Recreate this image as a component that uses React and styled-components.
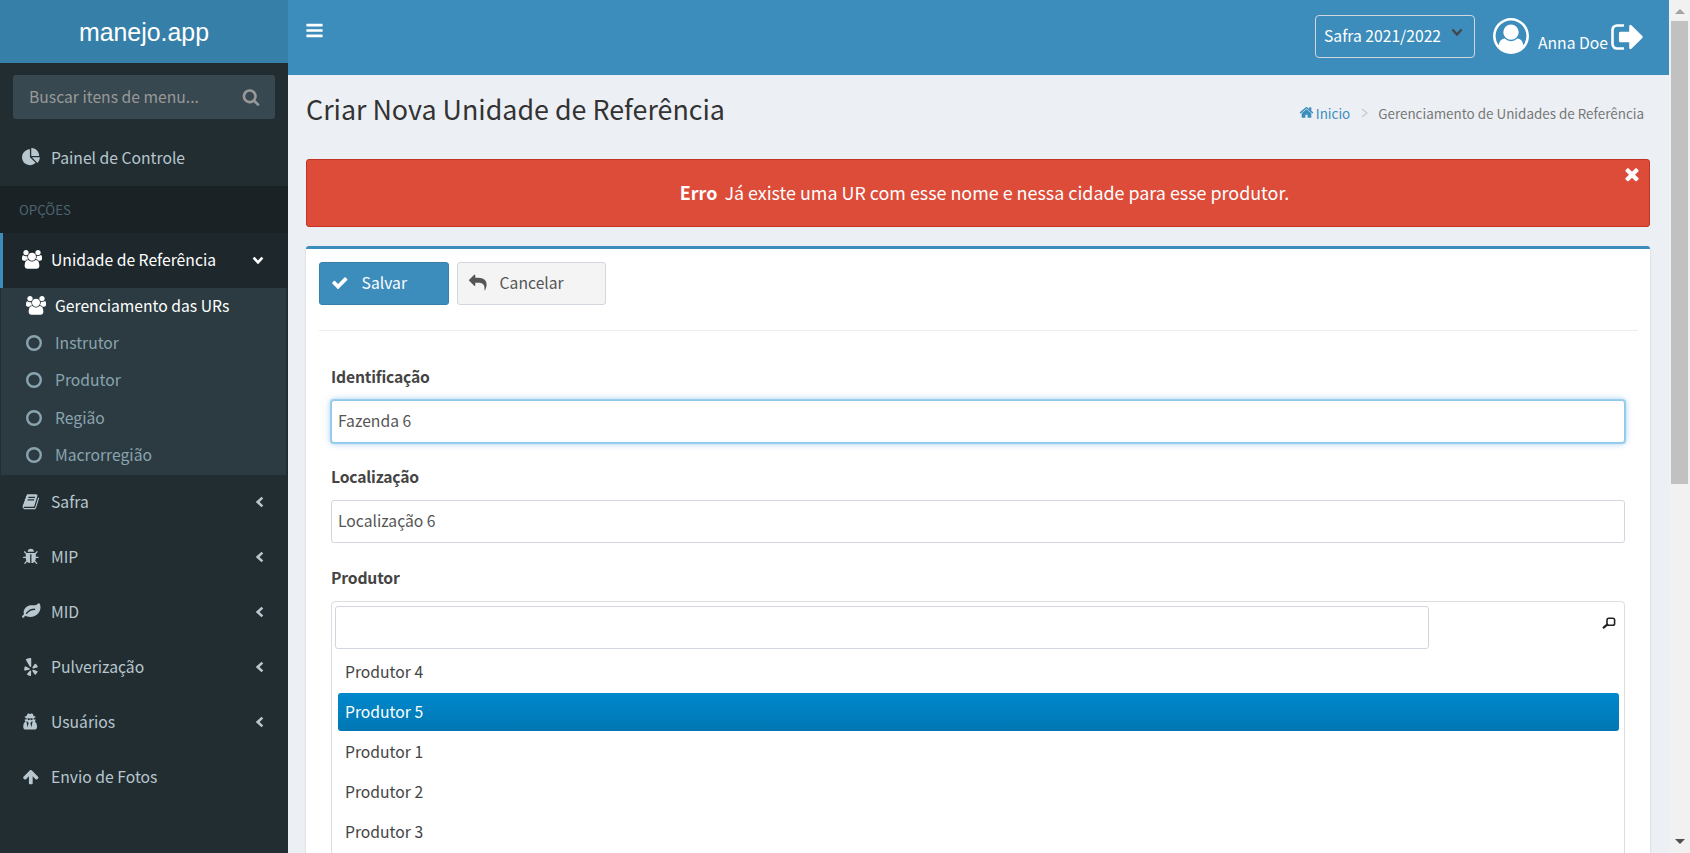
import React from 'react';
import styled, { createGlobalStyle, css } from 'styled-components';
import { FaYelp } from 'react-icons/fa';

const GlobalStyle = createGlobalStyle`
  *, *::before, *::after { box-sizing: border-box; }
  html, body { margin: 0; height: 100%; overflow: hidden; }
  body {
    font-family: 'Noto Sans CJK JP', 'Noto Sans CJK SC', 'Source Sans Pro', 'Open Sans', sans-serif;
    font-size: 15.7px;
    line-height: 24px;
    color: #444;
    background: #ecf0f5;
  }
  input, button { font: inherit; color: inherit; }
`;

/* ---------- icons (1792-unit grid) ---------- */

const PATHS = {
  bars: 'M1664 1344v128q0 26-19 45t-45 19h-1408q-26 0-45-19t-19-45v-128q0-26 19-45t45-19h1408q26 0 45 19t19 45zm0-512v128q0 26-19 45t-45 19h-1408q-26 0-45-19t-19-45v-128q0-26 19-45t45-19h1408q26 0 45 19t19 45zm0-512v128q0 26-19 45t-45 19h-1408q-26 0-45-19t-19-45v-128q0-26 19-45t45-19h1408q26 0 45 19t19 45z',
  search: 'M1216 832q0-185-131.5-316.5t-316.5-131.5-316.5 131.5-131.5 316.5 131.5 316.5 316.5 131.5 316.5-131.5 131.5-316.5zm512 832q0 52-38 90t-90 38q-54 0-90-38l-343-342q-179 124-399 124-143 0-273.5-55.5t-225-150-150-225-55.5-273.5 55.5-273.5 150-225 225-150 273.5-55.5 273.5 55.5 225 150 150 225 55.5 273.5q0 220-124 399l343 343q37 37 37 90z',
  pie: 'M768 890l546 546q-106 108-247.5 168t-298.5 60q-209 0-385.5-103t-279.5-279.5-103-385.5 103-385.5 279.5-279.5 385.5-103v762zm187 6h773q0 157-60 298.5t-168 247.5zm709-128h-768v-768q209 0 385.5 103t279.5 279.5 103 385.5z',
  users: 'M593 896q-162 5-265 128h-134q-82 0-138-40.5t-56-118.5q0-353 124-353 6 0 43.5 21t97.5 42.5 119 21.5q67 0 133-23-5 37-5 66 0 159 93 290zm1071 637q0 120-73 189.5t-194 69.5h-874q-121 0-194-69.5t-73-189.5q0-53 3.5-103.5t14-109 26.5-108.5 43-97.5 62-81 85.5-53.5 111.5-20q10 0 43 21.5t73 48 107 48 135 21.5 135-21.5 107-48 73-48 43-21.5q61 0 111.5 20t85.5 53.5 62 81 43 97.5 26.5 108.5 14 109 3.5 103.5zm-1024-1277q0 106-75 181t-181 75-181-75-75-181 75-181 181-75 181 75 75 181zm704 384q0 159-112.5 271.5t-271.5 112.5-271.5-112.5-112.5-271.5 112.5-271.5 271.5-112.5 271.5 112.5 112.5 271.5zm576 225q0 78-56 118.5t-138 40.5h-134q-103-123-265-128 93-131 93-290 0-29-5-66 66 23 133 23 59 0 119-21.5t97.5-42.5 43.5-21q124 0 124 353zm-128-609q0 106-75 181t-181 75-181-75-75-181 75-181 181-75 181 75 75 181z',
  book: 'M1703 478q40 57 18 129l-275 906q-19 64-76.5 107.5t-122.5 43.5h-923q-77 0-148.5-53.5t-99.5-131.5q-24-67-2-127 0-4 3-27t4-37q1-8-3-21.5t-3-19.5q2-11 8-21t16.5-23.5 16.5-23.5q23-38 45-91.5t30-91.5q3-10 .5-30t-.5-28q3-11 17-28t17-23q21-36 42-92t25-90q1-9-2.5-32t.5-28q4-13 22-30.5t22-22.5q19-26 42.5-84.5t27.5-96.5q1-8-3-25.5t-2-26.5q2-8 9-18t18-23 17-21q8-12 16.5-30.5t15-35 16-36 19.5-32 26.5-23.5 36-11.5 47.5 5.5l-1 3q38-9 51-9h761q74 0 114 56t18 130l-274 906q-36 119-71.5 153.5t-128.5 34.5h-869q-27 0-38 15-11 16-1 43 24 70 144 70h923q29 0 56-15.5t35-41.5l300-987q7-22 5-57 38 15 59 43zm-1064 2q-4 13 2 22.5t20 9.5h608q13 0 25.5-9.5t16.5-22.5l21-64q4-13-2-22.5t-20-9.5h-608q-13 0-25.5 9.5t-16.5 22.5zm-83 256q-4 13 2 22.5t20 9.5h608q13 0 25.5-9.5t16.5-22.5l21-64q4-13-2-22.5t-20-9.5h-608q-13 0-25.5 9.5t-16.5 22.5z',
  bug: 'M1696 960q0 26-19 45t-45 19h-224q0 171-67 290l208 209q19 19 19 45t-19 45q-18 19-45 19t-45-19l-198-197q-5 5-15 13t-42 28.5-65 36.5-82 29-97 13v-896h-128v896q-51 0-101.5-13.5t-87-33-66-39-43.5-32.5l-15-14-183 207q-20 21-48 21-24 0-43-16-19-18-20.5-44.5t15.5-46.5l202-227q-58-114-58-274h-224q-26 0-45-19t-19-45 19-45 45-19h224v-294l-173-173q-19-19-19-45t19-45 45-19 45 19l173 173h844l173-173q19-19 45-19t45 19 19 45-19 45l-173 173v294h224q26 0 45 19t19 45zm-480-576h-640q0-133 93.5-226.5t226.5-93.5 226.5 93.5 93.5 226.5z',
  leaf: 'M1280 704q0-26-19-45t-45-19q-172 0-318 49.5t-259.5 134-235.5 219.5q-19 21-19 45 0 26 19 45t45 19q24 0 45-19 27-24 74-71t67-66q137-124 268.5-176t313.5-52q26 0 45-19t19-45zm512-198q0 95-20 193-46 224-184.5 383t-357.5 268q-214 108-438 108-148 0-286-47-15-5-88-42t-96-37q-16 0-39.5 32t-45 70-52.5 70-60 32q-43 0-63.5-17.5t-45.5-59.5q-2-4-6-11t-5.5-10-3-9.5-1.5-13.5q0-35 31-73.5t68-65.5 68-56 31-48q0-4-14-38t-16-44q-9-51-9-104 0-115 43.5-220t119-184.5 170.5-139 204-95.5q55-18 145-25.5t179.5-9 178.5-6 163.5-24 113.5-56.5l29.5-29.5 29.5-28 27-20 36.5-16 43.5-4.5q39 0 70.5 46t47.5 112 24 124 8 96z',
  secret: 'M704 1472l96-448-96-128-128-64zm384 0l128-640-128 64-96 128zm160-917q-2-4-4-6-10-8-96-8-70 0-167 19-7 2-21 2t-21-2q-97-19-167-19-86 0-96 8-2 2-4 6 2 18 4 27 2 3 7.5 6.5t7.5 10.5q2 4 7.5 20.5t7 20.5 7.5 17 8.5 17 9 14 12 13.5 14 9.5 17.5 8 20.5 4 24.5 2q36 0 59-12.5t32.5-30 14.5-34.5 11.5-29.5 17.5-12.5h12q11 0 17.5 12.5t11.5 29.5 14.5 34.5 32.5 30 59 12.5q13 0 24.5-2t20.5-4 17.5-8 14-9.5 12-13.5 9-14 8.5-17 7.5-17 7-20.5 7.5-20.5q2-7 7.5-10.5t7.5-6.5q2-9 4-27zm416 879q0 121-73 190t-194 69h-874q-121 0-194-69t-73-190q0-61 4.5-118t19-125.5 37.5-123.5 63.5-103.5 93.5-74.5l-90-220h214q-22-64-22-128 0-12 2-32-194-40-194-96 0-57 210-99 17-62 51.5-134t70.5-114q32-37 76-37 30 0 84 31t84 31 84-31 84-31q44 0 76 37 36 42 70.5 114t51.5 134q210 42 210 99 0 56-194 96 7 81-20 160h214l-82 225q63 33 107.5 96.5t65.5 143.5 29 151.5 8 148.5z',
  up: 'M1675 971q0 51-37 90l-75 75q-38 38-91 38-54 0-90-38l-294-293v704q0 52-37.5 84.5t-90.5 32.5h-128q-53 0-90.5-32.5t-37.5-84.5v-704l-294 293q-36 38-90 38t-90-38l-75-75q-38-38-38-90 0-53 38-91l651-651q35-37 90-37 54 0 91 37l651 651q37 39 37 91z',
  user: 'M896 0q182 0 348 71t286 191 191 286 71 348q0 181-70.5 347t-190.5 286-286 191.5-349 71.5-349-71-285.5-191.5-190.5-286-71-347.5 71-348 191-286 286-191 348-71zm619 1351q149-205 149-455 0-156-61-298t-164-245-245-164-298-61-298 61-245 164-164 245-61 298q0 250 149 455 66-327 306-327 131 128 313 128t313-128q240 0 306 327zm-235-647q0-159-112.5-271.5t-271.5-112.5-271.5 112.5-112.5 271.5 112.5 271.5 271.5 112.5 271.5-112.5 112.5-271.5z',
  signout: 'M704 1440q0 4 1 20t.5 26.5-3 23.5-10 19.5-20.5 6.5h-320q-119 0-203.5-84.5t-84.5-203.5v-704q0-119 84.5-203.5t203.5-84.5h320q13 0 22.5 9.5t9.5 22.5q0 4 1 20t.5 26.5-3 23.5-10 19.5-20.5 6.5h-320q-66 0-113 47t-47 113v704q0 66 47 113t113 47h312l11.5 1 11.5 3 8 5.5 7 9 2 13.5zm928-544q0 26-19 45l-544 544q-19 19-45 19t-45-19-19-45v-288h-448q-26 0-45-19t-19-45v-384q0-26 19-45t45-19h448v-288q0-26 19-45t45-19 45 19l544 544q19 19 19 45z',
  home: 'M1472 992v480q0 26-19 45t-45 19h-384v-384h-256v384h-384q-26 0-45-19t-19-45v-480q0-1 .5-3t.5-3l575-474 575 474q1 2 1 6zm223-69l-62 74q-8 9-21 11h-3q-13 0-21-7l-692-577-692 577q-12 8-24 7-13-2-21-11l-62-74q-8-10-7-23.5t11-21.5l719-599q32-26 76-26t76 26l244 204v-195q0-14 9-23t23-9h192q14 0 23 9t9 23v408l219 182q10 8 11 21.5t-7 23.5z',
  check: 'M1671 566q0 40-28 68l-724 724-136 136q-28 28-68 28t-68-28l-136-136-362-362q-28-28-28-68t28-68l136-136q28-28 68-28t68 28l294 295 656-657q28-28 68-28t68 28l136 136q28 28 28 68z',
  reply: 'M1792 1120q0 166-127 451-3 7-10.5 24t-13.5 30-13 22q-12 17-28 17-15 0-23.5-10t-8.5-25q0-9 2.5-26.5t2.5-23.5q5-68 5-123 0-101-17.5-181t-48.5-138.5-80-101-105.5-69.5-133-42.5-154-21.5-175.5-6h-224v256q0 26-19 45t-45 19-45-19l-512-512q-19-19-19-45t19-45l512-512q19-19 45-19t45 19 19 45v256h224q713 0 875 403 53 134 53 333z',
  times: 'M1490 1322q0 40-28 68l-136 136q-28 28-68 28t-68-28l-294-294-294 294q-28 28-68 28t-68-28l-136-136q-28-28-28-68t28-68l294-294-294-294q-28-28-28-68t28-68l136-136q28-28 68-28t68 28l294 294 294-294q28-28 68-28t68 28l136 136q28 28 28 68t-28 68l-294 294 294 294q28 28 28 68z',
};

const Svg = styled.svg`
  display: block;
  flex: none;
  fill: currentColor;
`;

const Icon = ({ name, size = 17.6, box = '0 0 1792 1792', width }) => (
  <Svg width={width || size} height={size} viewBox={box} aria-hidden="true">
    <path d={PATHS[name]} />
  </Svg>
);

const Chevron = ({ dir, w, h, stroke = 2.6, color }) => {
  const m = stroke / 2 + 0.3;
  const pts = {
    left: `${w - m},${m} ${m},${h / 2} ${w - m},${h - m}`,
    right: `${m},${m} ${w - m},${h / 2} ${m},${h - m}`,
    down: `${m},${m} ${w / 2},${h - m} ${w - m},${m}`,
  }[dir];
  return (
    <Svg width={w} height={h} viewBox={`0 0 ${w} ${h}`} aria-hidden="true">
      <polyline points={pts} fill="none" stroke={color || 'currentColor'} strokeWidth={stroke} />
    </Svg>
  );
};

const Ring = () => (
  <Svg width="16" height="16" viewBox="0 0 16 16" aria-hidden="true">
    <circle cx="8" cy="8" r="6.8" fill="none" stroke="currentColor" strokeWidth="2.4" />
  </Svg>
);

/* ---------- shell ---------- */

const Page = styled.div`
  display: flex;
  height: 853px;
  width: 1690px;
  overflow: hidden;
`;

const Sidebar = styled.aside`
  width: 288px;
  flex: none;
  background: #222d32;
  color: #b8c7ce;
`;

const Logo = styled.div`
  height: 63px;
  display: flex;
  align-items: center;
  justify-content: center;
  background: #367fa9;
  color: #fff;
  font: 24.9px/30px 'Liberation Sans', Arial, sans-serif;
`;

const MenuSearch = styled.div`
  height: 44px;
  margin: 12px 13px;
  padding: 0 15px 1px 16px;
  display: flex;
  align-items: center;
  justify-content: space-between;
  border-radius: 3px;
  background: #374850;
  color: #999;
`;

const MenuItem = styled.div`
  height: 55px;
  display: flex;
  align-items: center;
  padding: 0 24px 2px 19px;
  border-left: 3px solid transparent;
  ${(p) => p.$active && css`
    background: #1e282c;
    border-left-color: #3c8dbc;
    color: #fff;
  `}
`;

const MenuIcon = styled.span`
  width: 29px;
  flex: none;
  display: flex;
`;

const MenuText = styled.span`
  flex: 1;
  white-space: nowrap;
`;

const SectionHeader = styled.div`
  height: 47px;
  padding: 0 19px;
  display: flex;
  align-items: center;
  background: #1a2226;
  color: #4b646f;
  font-size: 13.3px;
`;

const Submenu = styled.div`
  height: 187px;
  margin: 0 2px 0 1px;
  background: #2c3b41;
`;

const SubItem = styled.div`
  height: 37.4px;
  display: flex;
  align-items: center;
  padding: 0 0 2px 25px;
  color: ${(p) => (p.$active ? '#fff' : '#8aa4af')};
`;

const Main = styled.main`
  flex: 1;
  min-width: 0;
  display: flex;
  flex-direction: column;
`;

const Navbar = styled.header`
  height: 75px;
  flex: none;
  display: flex;
  align-items: flex-start;
  justify-content: space-between;
  background: #3c8dbc;
  color: #fff;
  padding: 0 25px 0 17px;
`;

const Toggle = styled.div`
  padding-top: 21px;
`;

const NavRight = styled.div`
  display: flex;
  align-items: flex-start;
`;

const SeasonSelect = styled.div`
  width: 160px;
  height: 43px;
  margin: 15px 18px 0 0;
  padding: 0 11px 2px 8px;
  display: flex;
  align-items: center;
  justify-content: space-between;
  border: 1px solid #d2d6de;
  border-radius: 4px;
`;

const ChevronSlot = styled.span`
  padding-bottom: 7px;
`;

const Avatar = styled.div`
  margin: 18px 9px 0 0;
`;

const UserName = styled.div`
  margin: 31px 3px 0 0;
  white-space: nowrap;
`;

const SignOut = styled.div`
  margin-top: 19px;
`;

const ContentHeader = styled.div`
  display: flex;
  flex: none;
  justify-content: space-between;
  align-items: center;
  height: 84px;
  padding: 0 25px 12px 18px;
`;

const Title = styled.h1`
  margin: 0;
  padding-bottom: 4px;
  font-size: 26.85px;
  line-height: 40px;
  font-weight: 400;
  color: #333;
  white-space: nowrap;
`;

const Breadcrumb = styled.nav`
  display: flex;
  align-items: center;
  padding-top: 3px;
  font-size: 13.43px;
  color: #777;
  white-space: nowrap;
`;

const Crumb = styled.a`
  display: flex;
  align-items: center;
  gap: 2px;
  color: #3c8dbc;
  margin-right: 11px;
`;

const CrumbText = styled.span`
  margin-left: 10px;
`;

const Alert = styled.div`
  position: relative;
  flex: none;
  height: 68px;
  margin: 0 19px 19px 18px;
  display: flex;
  align-items: center;
  justify-content: center;
  gap: 7px;
  border: 1px solid #c23321;
  border-radius: 3px;
  background: #dd4b39;
  color: #fff;
  font-size: 17.9px;
  padding: 0 0 2px 13px;
  white-space: nowrap;
`;

const AlertClose = styled.span`
  position: absolute;
  top: 4px;
  right: 7px;
`;

const Card = styled.section`
  flex: 1;
  min-height: 0;
  margin: 0 19px 0 18px;
  padding: 13px 12px 0 13px;
  background: #fff;
  border-top: 3px solid #3c8dbc;
  border-radius: 3px 3px 0 0;
  box-shadow: 0 1px 2px rgba(0, 0, 0, 0.2);
`;

const Toolbar = styled.div`
  display: flex;
  gap: 8px;
  padding-bottom: 25px;
  border-bottom: 1px solid #eee;
`;

const Button = styled.button`
  width: ${(p) => p.$w}px;
  height: 43px;
  display: flex;
  align-items: center;
  gap: 13px;
  padding: 0 11px 2px;
  border: 1px solid ${(p) => (p.$primary ? '#367fa9' : '#d2d6de')};
  border-radius: 3px;
  background: ${(p) => (p.$primary ? '#3c8dbc' : '#f4f4f4')};
  color: ${(p) => (p.$primary ? '#fff' : '#555')};
`;

const Form = styled.div`
  padding: 34px 13px 0 12px;
`;

const Field = styled.div`
  margin-bottom: 22px;

  &:nth-child(2) {
    margin-bottom: 23px;
  }
`;

const Label = styled.label`
  display: block;
  height: 24px;
  margin-bottom: 11px;
  font-weight: 600;
  letter-spacing: -0.17px;
  color: #444;
`;

const Input = styled.input`
  display: block;
  width: 100%;
  height: 43px;
  padding: 0 6px 2px;
  border: 1px solid #d2d6de;
  border-radius: 3px;
  background: #fff;
  color: #555;
  outline: none;
  ${(p) => p.$focused && css`
    border-color: #8fc8ea;
    box-shadow: 0 0 1px 0.5px #9acbea, 0 0 7px rgba(102, 175, 233, 0.7);
  `}
`;

const ListBox = styled.div`
  height: 330px;
  padding: 4px 3px;
  border: 1px solid #ddd;
  border-radius: 4px;
`;

const ListSearch = styled.div`
  display: flex;
  justify-content: space-between;
  padding-right: 5px;
  margin-bottom: 4px;
`;

const FilterInput = styled(Input)`
  width: 1094px;
`;

const Magnifier = styled.span`
  padding-top: 11px;
`;

const Option = styled.div`
  height: 38px;
  margin: 0 2px 2px 3px;
  padding: 0 7px;
  line-height: 37px;
  border-radius: 3px;
  color: ${(p) => (p.$selected ? '#fff' : '#444')};
  background: ${(p) => (p.$selected ? 'linear-gradient(#0088cc, #0077b3)' : 'none')};
`;

const Scrollbar = styled.div`
  width: 21px;
  flex: none;
  display: flex;
  flex-direction: column;
  justify-content: space-between;
  align-items: center;
  padding: 9px 0 9px;
  background: #f1f1f1;
`;

const Thumb = styled.div`
  width: 17px;
  height: 463px;
  margin: 7px 0 auto;
  background: #c1c1c1;
`;

const Arrow = styled.div`
  border: 5px solid transparent;
  ${(p) => (p.$up
    ? css`border-top: 0; border-bottom-color: #a3a3a3;`
    : css`border-bottom: 0; border-top-color: #505050;`)}
`;

const modules = [
  { icon: <Icon name="book" />, text: 'Safra', sub: true },
  { icon: <Icon name="bug" />, text: 'MIP', sub: true },
  { icon: <Icon name="leaf" size={18.5} />, text: 'MID', sub: true },
  { icon: <FaYelp size={18} />, text: 'Pulverização', sub: true },
  { icon: <Icon name="secret" width={15} box="128 0 1536 1792" size={17.6} />, text: 'Usuários', sub: true },
  { icon: <Icon name="up" />, text: 'Envio de Fotos' },
];

const producers = ['Produtor 4', 'Produtor 5', 'Produtor 1', 'Produtor 2', 'Produtor 3'];

const UsersIcon = () => <Icon name="users" width={20} size={18.7} box="0 0 1920 1792" />;

export default function App() {
  return (
    <>
      <GlobalStyle />
      <Page>
        <Sidebar>
          <Logo>manejo.app</Logo>
          <MenuSearch>
            <span>Buscar itens de menu...</span>
            <Icon name="search" size={18} />
          </MenuSearch>
          <MenuItem>
            <MenuIcon><Icon name="pie" size={18.5} /></MenuIcon>
            <MenuText>Painel de Controle</MenuText>
          </MenuItem>
          <SectionHeader>OPÇÕES</SectionHeader>
          <MenuItem $active>
            <MenuIcon><UsersIcon /></MenuIcon>
            <MenuText>Unidade de Referência</MenuText>
            <Chevron dir="down" w={12} h={8} />
          </MenuItem>
          <Submenu>
            <SubItem $active>
              <MenuIcon><UsersIcon /></MenuIcon>
              <MenuText>Gerenciamento das URs</MenuText>
            </SubItem>
            {['Instrutor', 'Produtor', 'Região', 'Macrorregião'].map((t) => (
              <SubItem key={t}>
                <MenuIcon><Ring /></MenuIcon>
                <MenuText>{t}</MenuText>
              </SubItem>
            ))}
          </Submenu>
          {modules.map((m) => (
            <MenuItem key={m.text}>
              <MenuIcon>{m.icon}</MenuIcon>
              <MenuText>{m.text}</MenuText>
              {m.sub && <Chevron dir="left" w={8} h={12} />}
            </MenuItem>
          ))}
        </Sidebar>

        <Main>
          <Navbar>
            <Toggle><Icon name="bars" size={19} /></Toggle>
            <NavRight>
              <SeasonSelect>
                <span>Safra 2021/2022</span>
                <ChevronSlot><Chevron dir="down" w={12} h={8} stroke={2.2} color="#444" /></ChevronSlot>
              </SeasonSelect>
              <Avatar><Icon name="user" size={36} /></Avatar>
              <UserName>Anna Doe</UserName>
              <SignOut><Icon name="signout" width={33} size={36} box="80 0 1590 1792" /></SignOut>
            </NavRight>
          </Navbar>

          <ContentHeader>
            <Title>Criar Nova Unidade de Referência</Title>
            <Breadcrumb>
              <Crumb><Icon name="home" size={15} />Inicio</Crumb>
              <Chevron dir="right" w={7} h={10} stroke={1.4} color="#ccc" />
              <CrumbText>Gerenciamento de Unidades de Referência</CrumbText>
            </Breadcrumb>
          </ContentHeader>

          <Alert>
            <strong>Erro</strong>
            <span>Já existe uma UR com esse nome e nessa cidade para esse produtor.</span>
            <AlertClose><Icon name="times" size={20} /></AlertClose>
          </Alert>

          <Card>
            <Toolbar>
              <Button $primary $w={130}><Icon name="check" />Salvar</Button>
              <Button $w={149}><Icon name="reply" />Cancelar</Button>
            </Toolbar>
            <Form>
              <Field>
                <Label>Identificação</Label>
                <Input $focused defaultValue="Fazenda 6" />
              </Field>
              <Field>
                <Label>Localização</Label>
                <Input defaultValue="Localização 6" />
              </Field>
              <Field>
                <Label>Produtor</Label>
                <ListBox>
                  <ListSearch>
                    <FilterInput />
                    <Magnifier>
                      <Svg width="14" height="12" viewBox="0 0 14 12" aria-hidden="true">
                        <rect x="5" y="1.2" width="7.6" height="7" rx="1.8" fill="none" stroke="#222" strokeWidth="1.6" />
                        <path d="M5.2 7.6L1.6 10.6" stroke="#222" strokeWidth="2.2" strokeLinecap="round" />
                      </Svg>
                    </Magnifier>
                  </ListSearch>
                  {producers.map((p) => (
                    <Option key={p} $selected={p === 'Produtor 5'}>{p}</Option>
                  ))}
                </ListBox>
              </Field>
            </Form>
          </Card>
        </Main>

        <Scrollbar>
          <Arrow $up />
          <Thumb />
          <Arrow />
        </Scrollbar>
      </Page>
    </>
  );
}
